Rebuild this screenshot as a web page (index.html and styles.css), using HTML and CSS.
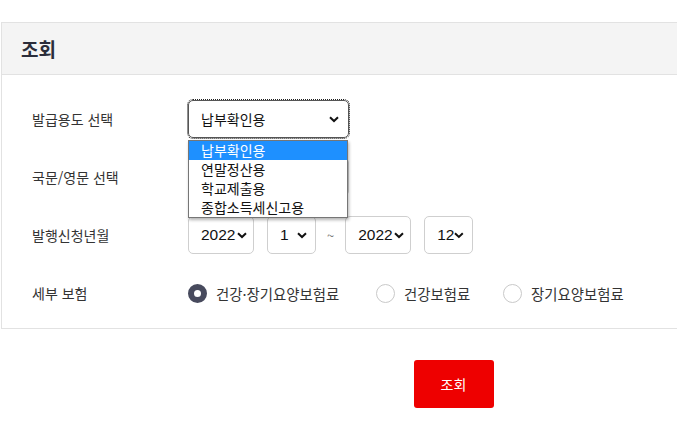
FILE: index.html
```html
<!DOCTYPE html>
<html lang="ko">
<head>
<meta charset="utf-8">
<link rel="stylesheet" href="styles.css">
</head>
<body>
<div class="page">
  <div class="panel">
    <div class="panel-head"><h2 class="title">조회</h2></div>
    <div class="panel-body">
      <div class="row">
        <div class="label">발급용도 선택</div>
        <div class="field">
          <div class="select select-wide focused">
            <span class="sel-text">납부확인용</span>
            <svg class="chev" width="10" height="7" viewBox="0 0 10 7"><path d="M1 1.2 L5 5 L9 1.2" fill="none" stroke="#111" stroke-width="2"/></svg>
          </div>
          <ul class="dropdown">
            <li class="opt active">납부확인용</li>
            <li class="opt">연말정산용</li>
            <li class="opt">학교제출용</li>
            <li class="opt">종합소득세신고용</li>
          </ul>
        </div>
      </div>
      <div class="row">
        <div class="label">국문/영문 선택</div>
        <div class="field">
          <div class="select select-wide">
            <span class="sel-text"></span>
            <svg class="chev" width="10" height="7" viewBox="0 0 10 7"><path d="M1 1.2 L5 5 L9 1.2" fill="none" stroke="#111" stroke-width="2"/></svg>
          </div>
        </div>
      </div>
      <div class="row">
        <div class="label">발행신청년월</div>
        <div class="field dates">
          <div class="select select-year">
            <span class="sel-text num">2022</span>
            <svg class="chev" width="10" height="7" viewBox="0 0 10 7"><path d="M1 1.2 L5 5 L9 1.2" fill="none" stroke="#111" stroke-width="2"/></svg>
          </div>
          <div class="select select-month">
            <span class="sel-text num">1</span>
            <svg class="chev" width="10" height="7" viewBox="0 0 10 7"><path d="M1 1.2 L5 5 L9 1.2" fill="none" stroke="#111" stroke-width="2"/></svg>
          </div>
          <span class="tilde">~</span>
          <div class="select select-year">
            <span class="sel-text num">2022</span>
            <svg class="chev" width="10" height="7" viewBox="0 0 10 7"><path d="M1 1.2 L5 5 L9 1.2" fill="none" stroke="#111" stroke-width="2"/></svg>
          </div>
          <div class="select select-month">
            <span class="sel-text num">12</span>
            <svg class="chev" width="10" height="7" viewBox="0 0 10 7"><path d="M1 1.2 L5 5 L9 1.2" fill="none" stroke="#111" stroke-width="2"/></svg>
          </div>
        </div>
      </div>
      <div class="row">
        <div class="label">세부 보험</div>
        <div class="field radios">
          <label class="radio radio-1"><span class="dot checked"></span><span class="r-text">건강·장기요양보험료</span></label>
          <label class="radio radio-2"><span class="dot"></span><span class="r-text">건강보험료</span></label>
          <label class="radio"><span class="dot"></span><span class="r-text">장기요양보험료</span></label>
        </div>
      </div>
    </div>
  </div>
  <div class="actions">
    <button class="btn-search">조회</button>
  </div>
</div>
</body>
</html>
```
FILE: styles.css
```css
html, body {
  margin: 0;
  padding: 0;
  background: #fff;
  overflow: hidden;
}
body {
  font-family: "Noto Sans CJK KR", "Noto Sans", sans-serif;
  color: #333;
}
.page {
  width: 905px;
  padding: 22px 0 0 1px;
}
.panel {
  border: 1px solid #e2e2e2;
}
.panel-head {
  height: 51px;
  background: #f4f4f4;
  border-bottom: 1px solid #e2e2e2;
  display: flex;
  align-items: center;
  padding-left: 19px;
}
.title {
  margin: 0;
  font-size: 19px;
  font-weight: 700;
  color: #2b2d3a;
  line-height: 1;
}
.panel-body {
  padding: 25px 0 16px 30px;
  display: flex;
  flex-direction: column;
  gap: 20px;
}
.row {
  display: flex;
  align-items: center;
  height: 38px;
}
.label {
  width: 156px;
  font-size: 14px;
  color: #333;
}
.field {
  position: relative;
  display: flex;
  align-items: center;
}
.select {
  box-sizing: border-box;
  height: 38px;
  border: 1px solid #cfcfcf;
  border-radius: 5px;
  background: #fff;
  display: flex;
  align-items: center;
  justify-content: space-between;
  padding: 0 9px 0 12px;
}
.select-wide {
  width: 161px;
}
.focused {
  border: 1px solid #555;
  outline: 1px dotted #222;
  outline-offset: 0;
}
.sel-text {
  font-size: 14px;
  color: #111;
}
.num {
  font-family: "Liberation Sans", Arial, sans-serif;
  font-size: 15.5px;
  color: #111;
}
.chev {
  display: block;
}
.dropdown {
  position: absolute;
  top: 40px;
  left: 0;
  width: 158px;
  margin: 0;
  padding: 0;
  list-style: none;
  background: #fff;
  border: 1px solid #767676;
  box-shadow: 1px 2px 3px rgba(0,0,0,0.3);
  z-index: 5;
}
.opt {
  height: 19px;
  line-height: 19px;
  padding-left: 12px;
  font-size: 14px;
  color: #111;
}
.opt.active {
  background: #1e90ff;
  color: #fff;
}
.dates {
  gap: 13px;
}
.select-year {
  width: 66px;
  padding: 0 6px 0 12px;
}
.select-month {
  width: 49px;
  padding: 0 8px 0 12px;
}
.tilde {
  font-size: 13px;
  color: #777;
  margin: 0 -2px 0 -2px;
}
.radios {
  gap: 0;
}
.radio {
  display: flex;
  align-items: center;
  gap: 9px;
  font-size: 14.4px;
  color: #333;
}
.radio-1 {
  width: 188px;
}
.radio-2 {
  width: 127px;
}
.dot {
  box-sizing: border-box;
  width: 19px;
  height: 19px;
  border-radius: 50%;
  border: 1px solid #c9c9c9;
  background: #fff;
}
.dot.checked {
  border: 6px solid #474a5d;
  background: #fff;
}
.actions {
  display: flex;
  justify-content: center;
  padding-top: 31px;
}
.btn-search {
  width: 80px;
  height: 48px;
  border: 0;
  border-radius: 3px;
  background: #ee0000;
  color: #fff;
  font-family: "Noto Sans CJK KR", sans-serif;
  font-size: 14px;
  padding: 0;
}
```
